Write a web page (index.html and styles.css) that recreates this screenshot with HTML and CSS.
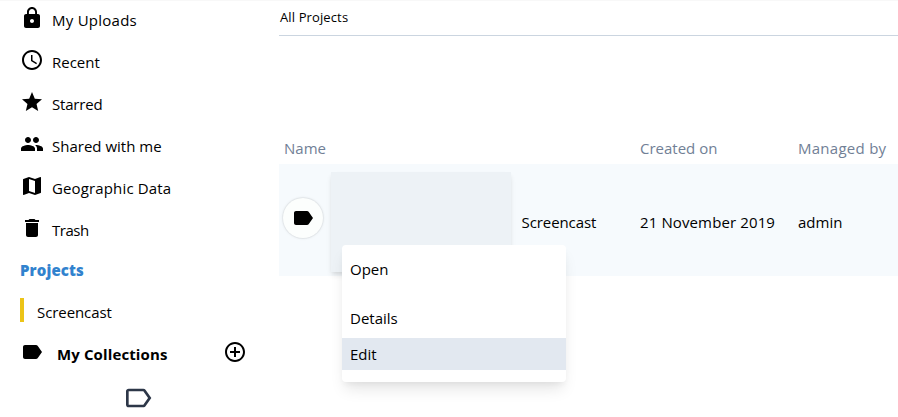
FILE: index.html
```html
<!DOCTYPE html>
<html lang="en">
<head>
<meta charset="utf-8">
<title>All Projects</title>
<link rel="stylesheet" href="styles.css">
</head>
<body>
<div class="app">
  <nav class="sidebar">
    <a class="nav-item"><svg class="icon" viewBox="0 0 24 24"><path d="M18 8h-1V6c0-2.76-2.24-5-5-5S7 3.24 7 6v2H6c-1.100 0-2 .9-2 2v10c0 1.100.9 2 2 2h12c1.100 0 2-.9 2-2V10c0-1.100-.9-2-2-2zm-6 9c-1.100 0-2-.9-2-2s.9-2 2-2 2 .9 2 2-.9 2-2 2zm3.100-9H8.900V6c0-1.710 1.390-3.100 3.100-3.100s3.100 1.390 3.100 3.100v2z"/></svg><span class="t-uploads">My Uploads</span></a>
    <a class="nav-item"><svg class="icon" viewBox="0 0 24 24"><path d="M11.990 2C6.470 2 2 6.480 2 12s4.470 10 9.990 10C17.520 22 22 17.520 22 12S17.520 2 11.990 2zM12 20c-4.420 0-8-3.580-8-8s3.580-8 8-8 8 3.580 8 8-3.580 8-8 8zm.5-13H11v6l5.250 3.150.75-1.230-4.500-2.670z"/></svg><span class="t-recent">Recent</span></a>
    <a class="nav-item"><svg class="icon" viewBox="0 0 24 24"><path d="M12 17.270L18.180 21l-1.640-7.030L22 9.240l-7.190-.61L12 2 9.190 8.630 2 9.240l5.460 4.730L5.820 21z"/></svg><span class="t-starred">Starred</span></a>
    <a class="nav-item"><svg class="icon" viewBox="0 0 24 24"><path d="M16 11c1.660 0 2.990-1.340 2.990-3S17.660 5 16 5s-3 1.340-3 3 1.340 3 3 3zm-8 0c1.660 0 2.990-1.340 2.990-3S9.660 5 8 5 5 6.340 5 8s1.340 3 3 3zm0 2c-2.330 0-7 1.170-7 3.500V19h14v-2.500c0-2.330-4.670-3.500-7-3.500zm8 0c-.29 0-.62.020-.97.050 1.160.84 1.970 1.970 1.970 3.450V19h6v-2.500c0-2.330-4.670-3.500-7-3.500z"/></svg><span class="t-shared">Shared with me</span></a>
    <a class="nav-item"><svg class="icon" viewBox="0 0 24 24"><path d="M20.500 3l-.16.030L15 5.100 9 3 3.360 4.900c-.21.070-.36.250-.36.480V20.500c0 .28.220.5.500.5l.16-.03L9 18.900l6 2.100 5.640-1.900c.21-.07.360-.25.360-.48V3.500c0-.28-.22-.5-.5-.5zM15 19l-6-2.110V5l6 2.110V19z"/></svg><span class="t-geo">Geographic Data</span></a>
    <a class="nav-item"><svg class="icon" viewBox="0 0 24 24"><path d="M6 19c0 1.100.9 2 2 2h8c1.100 0 2-.9 2-2V7H6v12zM19 4h-3.500l-1-1h-5l-1 1H5v2h14V4z"/></svg><span class="t-trash">Trash</span></a>
    <h2 class="section"><span class="t-projects">Projects</span></h2>
    <a class="project"><i class="marker"></i><span class="t-screencast">Screencast</span></a>
    <div class="collections">
      <svg class="icon" viewBox="0 0 24 24"><path d="M17.630 5.840C17.270 5.330 16.670 5 16 5L5 5.010C3.900 5.010 3 5.900 3 7v10c0 1.100.9 1.990 2 1.990L16 19c.67 0 1.270-.33 1.630-.84L22 12l-4.370-6.160z"/></svg>
      <span class="t-collections">My Collections</span>
      <svg class="icon add" viewBox="0 0 24 24"><path d="M13 7h-2v4H7v2h4v4h2v-4h4v-2h-4V7zm-1-5C6.480 2 2 6.480 2 12s4.480 10 10 10 10-4.480 10-10S17.520 2 12 2zm0 18c-4.410 0-8-3.590-8-8s3.590-8 8-8 8 3.590 8 8-3.590 8-8 8z"/></svg>
    </div>
    <svg class="empty-label" viewBox="0 0 24 24"><path d="M17.630 5.840C17.270 5.330 16.670 5 16 5L5 5.010C3.900 5.010 3 5.900 3 7v10c0 1.100.9 1.990 2 1.990L16 19c.67 0 1.270-.33 1.630-.84L22 12l-4.370-6.160zM16 17H5V7h11l3.550 5L16 17z"/></svg>
  </nav>
  <main class="content">
    <header class="crumb"><span class="t-all">All Projects</span></header>
    <div class="grid head">
      <span class="name-head">Name</span>
      <span class="t-created">Created on</span>
      <span class="t-managed">Managed by</span>
    </div>
    <div class="grid row">
      <div class="name-cell">
        <span class="badge"><svg class="icon" viewBox="0 0 24 24"><path d="M17.630 5.840C17.270 5.330 16.670 5 16 5L5 5.010C3.900 5.010 3 5.900 3 7v10c0 1.100.9 1.990 2 1.990L16 19c.67 0 1.270-.33 1.630-.84L22 12l-4.370-6.160z"/></svg></span>
        <div class="thumb">
          <div class="menu">
            <a class="menu-item open"><span>Open</span></a>
            <a class="menu-item"><span>Details</span></a>
            <a class="menu-item active"><span>Edit</span></a>
          </div>
        </div>
        <span class="cell-text t-screencast">Screencast</span>
      </div>
      <span class="cell-text t-date">21 November 2019</span>
      <span class="cell-text">admin</span>
    </div>
  </main>
</div>
</body>
</html>
```
FILE: styles.css
```css
* { box-sizing: border-box; }
body {
  margin: 0;
  background: #fff;
  color: #000;
  font: 15px/24px "Open Sans", "Noto Sans", sans-serif;
}
.app {
  display: flex;
  height: 417px;
  overflow: hidden;
  border-top: 1px solid #f8f8f8;
}
.sidebar {
  flex: none;
  width: 279px;
  padding: 5px 32px 0 20px;
}
.icon { display: block; flex: none; width: 24px; height: 24px; fill: currentColor; }
span { white-space: nowrap; }
.nav-item { display: flex; height: 42px; gap: 8px; }
.nav-item span { padding-top: 2px; }
.section {
  margin: 0;
  height: 40px;
  font-size: 15px;
  font-weight: 800;
  line-height: 24px;
  color: #3182ce;
}
.project { display: flex; height: 42px; }
.project .marker { width: 4px; height: 24px; margin-right: 13px; background: #ecc417; }
.project span { padding-top: 2px; }
.collections { display: flex; height: 42px; font-weight: 700; }
.collections span { margin-left: 13px; padding-top: 2px; }
.collections .add { margin-left: auto; margin-right: 0; }
.empty-label { display: block; width: 32px; height: 32px; margin: 0 0 0 102px; fill: #2d3748; }
.content { flex: 1; min-width: 0; }
.crumb {
  height: 35px;
  padding-top: 4px;
  padding-left: 1px;
  border-bottom: 1px solid #cbd5e0;
  font-size: 13px;
}
.grid { display: grid; grid-template-columns: 361px 158px 100px; }
.head { margin-top: 100px; height: 28px; color: #718096; }
.name-head { padding-left: 5px; }
.row { height: 112px; background: #f6fafd; }
.name-cell { display: flex; }
.badge {
  flex: none;
  width: 40px;
  height: 40px;
  margin: 34px 8px 0 4px;
  padding: 8px;
  border-radius: 50%;
  background: #fcfefd;
  box-shadow: 0 0 0 1px rgba(0, 0, 0, .03), 0 0 3px rgba(0, 0, 0, .13);
}
.thumb {
  position: relative;
  flex: none;
  width: 180px;
  height: 100px;
  margin: 8px 10.5px 0 0;
  background: #edf2f6;
  box-shadow: 0 4px 6px -1px rgba(0, 0, 0, .1), 0 2px 4px -1px rgba(0, 0, 0, .06);
}
.cell-text { padding-top: 46px; }
.menu {
  position: absolute;
  left: 11px;
  top: 73px;
  width: 224px;
  height: 137px;
  padding-top: 8px;
  border-radius: 4px;
  background: #fff;
  box-shadow: 0 10px 15px -3px rgba(0, 0, 0, .1), 0 4px 6px -2px rgba(0, 0, 0, .05);
}
.menu-item { display: block; height: 36px; padding: 4px 8px; }
.menu-item.open { height: 49px; }
.menu-item.active { height: 32px; background: #e2e8f0; }

/* Per-label tracking */
.t-uploads { letter-spacing: .25px; }
.t-starred { letter-spacing: -.2px; }
.t-trash { letter-spacing: -.5px; }
.t-geo { letter-spacing: .14px; }
.t-projects, .t-collections { letter-spacing: .12px; }
.t-screencast { letter-spacing: -.08px; }
.t-all { letter-spacing: .12px; }
.t-managed { letter-spacing: .27px; }
.t-date { letter-spacing: .12px; }
```
